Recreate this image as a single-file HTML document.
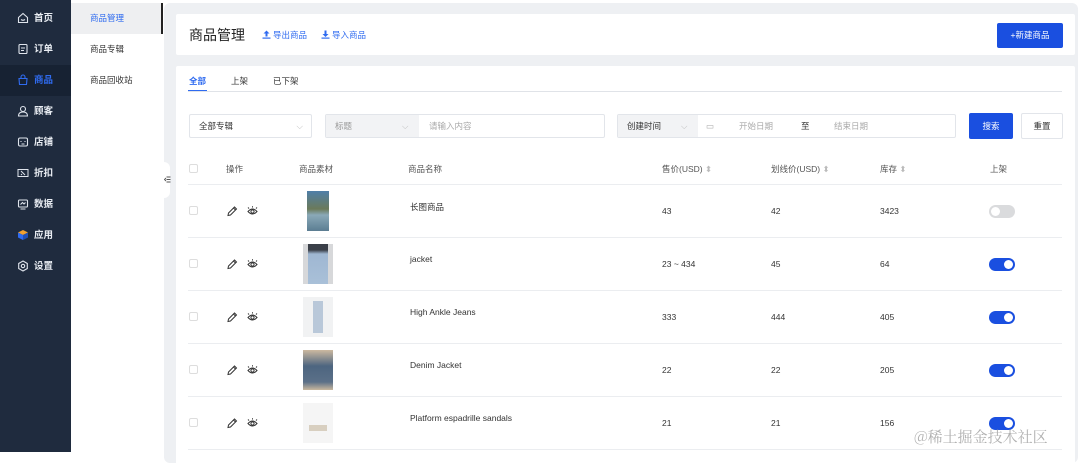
<!DOCTYPE html><html><head><meta charset="utf-8"><style>
*{margin:0;padding:0;box-sizing:border-box}
body{width:1080px;height:452px;overflow:hidden;background:#fff;font-family:"Liberation Sans","Noto Sans CJK SC",sans-serif;font-size:9px;color:#333;position:relative}
.abs{position:absolute}
.side{left:0;top:0;width:71px;height:452px;background:#1f2b3e}
.side .it{position:absolute;left:0;width:71px;height:31px;color:#e8ecf2;font-size:9.5px;font-weight:bold;line-height:31px;padding-left:34px}
.side .it svg{position:absolute;left:17px;top:9px}
.sub{left:71px;top:0;width:93px;height:452px;background:#fff}
.sub div{position:absolute;left:0;width:92px;height:31px;line-height:31px;padding-left:19px;font-size:8.5px;color:#333}
.bg{left:164px;top:3px;width:914px;height:460px;background:#eef0f3;border-radius:6px}
.card{background:#fff;border-radius:2px}
.hd{left:176px;top:14px;width:899px;height:41px}
.body{left:176px;top:66px;width:899px;height:400px}
.sel{position:absolute;height:24px;border:1px solid #e2e5ea;border-radius:2px;font-size:8.5px;line-height:22px;padding-left:9px;color:#333}
.ph{color:#aaa}
.line{position:absolute;left:188px;width:874px;height:1px;background:#ebedf0}
.cb{position:absolute;left:189px;width:9px;height:9px;border:1px solid #ddd;border-radius:2px}
.tog{position:absolute;left:989px;width:26px;height:13px;border-radius:7px;background:#1a4fe0}
.tog:after{content:"";position:absolute;right:2px;top:2px;width:9px;height:9px;border-radius:50%;background:#fff}
.tog.off{background:#dadbdd}.tog.off:after{right:auto;left:2px}
.t{position:absolute;font-size:8.5px;color:#333}
.th{position:absolute;top:163px;font-size:8.5px;color:#555}
.act{position:absolute;left:226px}
</style></head><body>
<div class="abs side">
<div class="it" style="top:3px"><svg width="12" height="12" viewBox="0 0 12 12" fill="none" stroke="#dfe4ec" stroke-width="1.1"><path d="M1.5 5.5L6 1.5l4.5 4v5h-9z"/><path d="M4 7.5q2 1.5 4 0"/></svg>首页</div>
<div class="it" style="top:34px"><svg width="12" height="12" viewBox="0 0 12 12" fill="none" stroke="#dfe4ec" stroke-width="1.1"><rect x="2" y="1.5" width="8" height="9" rx="1"/><path d="M4 5h4M4 7.5h3"/></svg>订单</div>
<div style="position:absolute;top:65px;left:0;width:71px;height:31px;background:#172233"></div>
<div class="it" style="top:65px;color:#2f6bf0"><svg width="12" height="12" viewBox="0 0 12 12" fill="none" stroke="#2f6bf0" stroke-width="1.1"><path d="M2 4.5h8l-.5 6h-7z"/><path d="M4 4.5V3a2 2 0 014 0v1.5"/></svg>商品</div>
<div class="it" style="top:96px"><svg width="12" height="12" viewBox="0 0 12 12" fill="none" stroke="#dfe4ec" stroke-width="1.1"><circle cx="6" cy="4" r="2.5"/><path d="M1.5 11q0-4 4.5-4t4.5 4z"/></svg>顾客</div>
<div class="it" style="top:127px"><svg width="12" height="12" viewBox="0 0 12 12" fill="none" stroke="#dfe4ec" stroke-width="1.1"><rect x="1.5" y="2" width="9" height="8" rx="1.5"/><path d="M4 5v1M8 5v1M4.5 8h3"/></svg>店铺</div>
<div class="it" style="top:158px"><svg width="12" height="12" viewBox="0 0 12 12" fill="none" stroke="#dfe4ec" stroke-width="1"><rect x="1" y="2.5" width="10" height="7"/><path d="M4 4l4 4M4 8l1-1"/></svg>折扣</div>
<div class="it" style="top:189px"><svg width="12" height="12" viewBox="0 0 12 12" fill="none" stroke="#dfe4ec" stroke-width="1.1"><rect x="1.5" y="2" width="9" height="7" rx="1"/><path d="M3.5 11h5M3.5 6.5l2-2 1.5 1.5 1.5-1.5"/></svg>数据</div>
<div class="it" style="top:220px"><svg width="12" height="12" viewBox="0 0 12 12"><path d="M6 1l5 2.5L6 6 1 3.5z" fill="#f0a030"/><path d="M1 3.5v5L6 11V6z" fill="#2f6bf0"/><path d="M11 3.5v5L6 11V6z" fill="#1e4fb8"/></svg>应用</div>
<div class="it" style="top:251px"><svg width="12" height="12" viewBox="0 0 12 12" fill="none" stroke="#dfe4ec" stroke-width="1.1"><path d="M6 1l4.3 2.5v5L6 11 1.7 8.5v-5z"/><circle cx="6" cy="6" r="1.7"/></svg>设置</div>
</div>
<div class="abs sub">
<div style="top:3px;background:#eeeff1;color:#2f6bf0;border-right:2px solid #222">商品管理</div>
<div style="top:34px">商品专辑</div>
<div style="top:65px">商品回收站</div>
</div>
<div class="abs bg"></div>
<div class="abs" style="left:158px;top:162px;width:12px;height:36px;background:#fff;border-radius:0 6px 6px 0"><svg style="position:absolute;left:6px;top:14px" width="7" height="7" viewBox="0 0 7 7" fill="none" stroke="#555" stroke-width=".9"><path d="M2.5 1h4M2.5 3.5h4M2.5 6h4M2 2L.5 3.5 2 5"/></svg></div>
<div class="abs card hd">
<div class="t" style="left:13px;top:11px;font-size:14px;color:#222">商品管理</div>
<svg style="position:absolute;left:86px;top:16px" width="9" height="9" viewBox="0 0 9 9" fill="#2f6bf0"><path d="M4.5 0.5L1.5 3.5h2v3h2v-3h2z"/><rect x="0.5" y="7.5" width="8" height="1.2"/></svg>
<div class="t" style="left:97px;top:15px;color:#2f6bf0">导出商品</div>
<svg style="position:absolute;left:145px;top:16px" width="9" height="9" viewBox="0 0 9 9" fill="#2f6bf0"><path d="M4.5 7L1.5 4h2V0.5h2V4h2z"/><rect x="0.5" y="7.5" width="8" height="1.2"/></svg>
<div class="t" style="left:156px;top:15px;color:#2f6bf0">导入商品</div>
<div style="position:absolute;left:821px;top:9px;width:66px;height:25px;background:#1a4fe0;border-radius:2px;color:#fff;font-size:8.5px;line-height:25px;text-align:center">+新建商品</div>
</div>
<div class="abs card body"></div>
<div class="t" style="left:189px;top:75px;color:#2f6bf0;font-weight:bold">全部</div>
<div class="abs" style="left:188px;top:90px;width:19px;height:2px;background:#2f6bf0"></div>
<div class="t" style="left:231px;top:75px">上架</div>
<div class="t" style="left:273px;top:75px">已下架</div>
<div class="line" style="top:91px;background:#e0e3e8"></div>
<div class="sel" style="left:189px;top:114px;width:123px">全部专辑<span style="position:absolute;right:8px;color:#bbb">⌵</span></div>
<div class="sel" style="left:325px;top:114px;width:280px;padding:0"><span style="display:inline-block;width:93px;height:22px;background:#f2f3f5;padding-left:9px;color:#999">标题<span style="position:absolute;left:76px;color:#bbb">⌵</span></span><span class="ph" style="padding-left:10px">请输入内容</span></div>
<div class="sel" style="left:617px;top:114px;width:339px;padding:0"><span style="display:inline-block;width:80px;height:22px;background:#f2f3f5;padding-left:9px">创建时间<span style="position:absolute;left:63px;color:#bbb">⌵</span></span><span class="ph" style="position:absolute;left:88px">▭</span><span class="ph" style="position:absolute;left:121px">开始日期</span><span style="position:absolute;left:183px">至</span><span class="ph" style="position:absolute;left:216px">结束日期</span></div>
<div class="abs" style="left:969px;top:113px;width:44px;height:26px;background:#1a4fe0;border-radius:2px;color:#fff;font-size:8.5px;line-height:26px;text-align:center">搜索</div>
<div class="abs" style="left:1021px;top:113px;width:42px;height:26px;border:1px solid #e2e5ea;border-radius:2px;font-size:8.5px;line-height:24px;text-align:center">重置</div>
<div class="cb" style="top:164px"></div>
<div class="th" style="left:226px">操作</div><div class="th" style="left:299px">商品素材</div><div class="th" style="left:408px">商品名称</div>
<div class="th" style="left:662px">售价(USD) <span style="color:#bbb">⬍</span></div><div class="th" style="left:771px">划线价(USD) <span style="color:#bbb">⬍</span></div><div class="th" style="left:880px">库存 <span style="color:#bbb">⬍</span></div><div class="th" style="left:990px">上架</div>
<div class="line" style="top:184px"></div>
<div class="line" style="top:237px"></div>
<div class="line" style="top:290px"></div>
<div class="line" style="top:343px"></div>
<div class="line" style="top:396px"></div>
<div class="line" style="top:449px"></div>
<div class="cb" style="top:206px"></div><div class="cb" style="top:259px"></div><div class="cb" style="top:312px"></div><div class="cb" style="top:365px"></div><div class="cb" style="top:418px"></div>
<svg class="act" style="top:205px" width="36" height="12" viewBox="0 0 36 12" fill="none" stroke="#333" stroke-width="1"><path d="M2 10.5l.5-2.5 6-6 2 2-6 6z M7.5 3l2 2"/><path d="M22 6.5q4.5-5 9 0q-4.5 5-9 0z"/><circle cx="26.5" cy="6.5" r="1.6"/><path d="M23 3.5l-1-1M26.5 2.5V1.2M30 3.5l1-1"/></svg>
<svg class="act" style="top:258px" width="36" height="12" viewBox="0 0 36 12" fill="none" stroke="#333" stroke-width="1"><path d="M2 10.5l.5-2.5 6-6 2 2-6 6z M7.5 3l2 2"/><path d="M22 6.5q4.5-5 9 0q-4.5 5-9 0z"/><circle cx="26.5" cy="6.5" r="1.6"/><path d="M23 3.5l-1-1M26.5 2.5V1.2M30 3.5l1-1"/></svg>
<svg class="act" style="top:311px" width="36" height="12" viewBox="0 0 36 12" fill="none" stroke="#333" stroke-width="1"><path d="M2 10.5l.5-2.5 6-6 2 2-6 6z M7.5 3l2 2"/><path d="M22 6.5q4.5-5 9 0q-4.5 5-9 0z"/><circle cx="26.5" cy="6.5" r="1.6"/><path d="M23 3.5l-1-1M26.5 2.5V1.2M30 3.5l1-1"/></svg>
<svg class="act" style="top:364px" width="36" height="12" viewBox="0 0 36 12" fill="none" stroke="#333" stroke-width="1"><path d="M2 10.5l.5-2.5 6-6 2 2-6 6z M7.5 3l2 2"/><path d="M22 6.5q4.5-5 9 0q-4.5 5-9 0z"/><circle cx="26.5" cy="6.5" r="1.6"/><path d="M23 3.5l-1-1M26.5 2.5V1.2M30 3.5l1-1"/></svg>
<svg class="act" style="top:417px" width="36" height="12" viewBox="0 0 36 12" fill="none" stroke="#333" stroke-width="1"><path d="M2 10.5l.5-2.5 6-6 2 2-6 6z M7.5 3l2 2"/><path d="M22 6.5q4.5-5 9 0q-4.5 5-9 0z"/><circle cx="26.5" cy="6.5" r="1.6"/><path d="M23 3.5l-1-1M26.5 2.5V1.2M30 3.5l1-1"/></svg>
<div class="abs" style="left:307px;top:191px;width:22px;height:40px;background:linear-gradient(#4f7fa8,#6b7a5a 45%,#8aa9b8 60%,#5b7d92)"></div>
<div class="abs" style="left:303px;top:244px;width:30px;height:40px;background:#d7d8da"><div style="margin:0 auto;width:20px;height:40px;background:linear-gradient(#3a3f48 0,#3a3f48 15%,#9fb7d2 25%,#a9c0d8)"></div></div>
<div class="abs" style="left:303px;top:297px;width:30px;height:40px;background:#f1f2f3"><div style="margin:4px auto;width:10px;height:32px;background:#b9c8d9"></div></div>
<div class="abs" style="left:303px;top:350px;width:30px;height:40px;background:linear-gradient(#ccb9a0,#4d6580 40%,#5b7088 80%,#c9b79e)"></div>
<div class="abs" style="left:303px;top:403px;width:30px;height:40px;background:#f5f5f5"><div style="margin:22px auto;width:18px;height:6px;background:#d8cfc0"></div></div>
<div class="t" style="left:410px;top:201px">长图商品</div>
<div class="t" style="left:410px;top:254px">jacket</div>
<div class="t" style="left:410px;top:307px">High Ankle Jeans</div>
<div class="t" style="left:410px;top:360px">Denim Jacket</div>
<div class="t" style="left:410px;top:413px">Platform espadrille sandals</div>
<div class="t" style="left:662px;top:206px">43</div><div class="t" style="left:771px;top:206px">42</div><div class="t" style="left:880px;top:206px">3423</div>
<div class="t" style="left:662px;top:259px">23 ~ 434</div><div class="t" style="left:771px;top:259px">45</div><div class="t" style="left:880px;top:259px">64</div>
<div class="t" style="left:662px;top:312px">333</div><div class="t" style="left:771px;top:312px">444</div><div class="t" style="left:880px;top:312px">405</div>
<div class="t" style="left:662px;top:365px">22</div><div class="t" style="left:771px;top:365px">22</div><div class="t" style="left:880px;top:365px">205</div>
<div class="t" style="left:662px;top:418px">21</div><div class="t" style="left:771px;top:418px">21</div><div class="t" style="left:880px;top:418px">156</div>
<div class="tog off" style="top:205px"></div>
<div class="tog" style="top:258px"></div>
<div class="tog" style="top:311px"></div>
<div class="tog" style="top:364px"></div>
<div class="tog" style="top:417px"></div>
<div class="abs" style="left:914px;top:426px;font-family:'Noto Serif CJK SC',serif;font-size:15px;color:rgba(150,150,150,.75)">@稀土掘金技术社区</div>
</body></html>
